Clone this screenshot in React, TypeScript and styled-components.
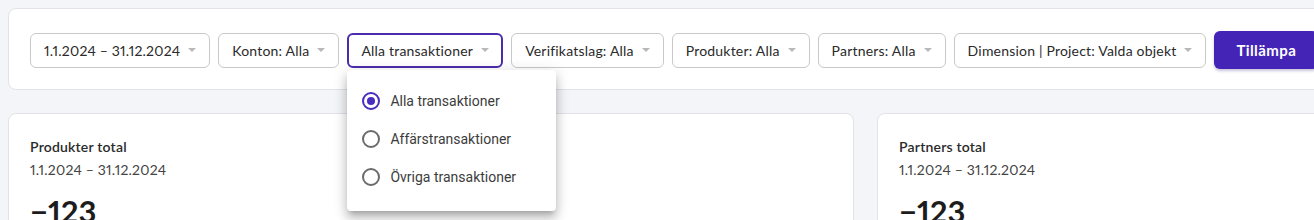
import React from "react";
import styled, { createGlobalStyle } from "styled-components";

const GlobalStyle = createGlobalStyle`
  html, body {
    margin: 0;
    padding: 0;
    background: #f4f5f8;
    overflow: hidden;
  }
  body {
    font-family: Lato, "Noto Sans", sans-serif;
    font-variant-numeric: proportional-nums;
    color: #222;
  }
`;

const Page = styled.div`
  width: 1715px;
  padding: 8px;
  display: flex;
  flex-direction: column;
  gap: 23px;
`;

const FilterCard = styled.div`
  background: #fff;
  border: 1px solid #e2e3e8;
  border-radius: 8px;
  padding: 22px 21px 20px;
`;

const FilterRow = styled.div`
  display: flex;
  align-items: center;
  gap: 8px;
  height: 38px;
`;

const SelectWrap = styled.div`
  position: relative;
`;

const SelectButton = styled.button<{ $active?: boolean }>`
  display: flex;
  align-items: center;
  gap: 8px;
  height: 35px;
  box-sizing: border-box;
  background: #fff;
  border: ${(p) => (p.$active ? "2px solid #4a2cad" : "1px solid #c9c9cc")};
  padding: 0 ${(p) => (p.$active ? 12 : 13)}px;
  border-radius: 6px;
  font-family: Lato, "Noto Sans", sans-serif;
  font-variant-numeric: proportional-nums;
  font-size: 14px;
  letter-spacing: 0.2px;
  color: #2a2a2a;
  white-space: nowrap;
  cursor: pointer;
`;

const Caret = styled.span`
  width: 0;
  height: 0;
  border-left: 4px solid transparent;
  border-right: 4px solid transparent;
  border-top: 4px solid #b8b8bc;
`;

const ApplyButton = styled.button`
  height: 38px;
  padding: 0 22px;
  background: #4423b7;
  color: #fff;
  border: none;
  border-radius: 6px;
  font-family: Lato, "Noto Sans", sans-serif;
  font-weight: 700;
  font-size: 15px;
  letter-spacing: 0.4px;
  box-shadow: 0 2px 3px rgba(40, 20, 110, 0.25);
  cursor: pointer;
`;

const Menu = styled.div`
  position: absolute;
  top: 37px;
  left: 0;
  width: 209px;
  background: #fff;
  border-radius: 4px;
  padding: 12px 0 15px;
  box-shadow: 0 5px 5px -3px rgba(0, 0, 0, 0.2), 0 8px 10px 1px rgba(0, 0, 0, 0.14),
    0 3px 14px 2px rgba(0, 0, 0, 0.12);
  z-index: 10;
`;

const MenuItem = styled.label`
  display: flex;
  align-items: center;
  gap: 10px;
  height: 38px;
  padding-left: 15px;
  font-family: Roboto, "Noto Sans", sans-serif;
  font-size: 14px;
  color: #3c3c3c;
  cursor: pointer;
`;

const RadioIcon = styled.span<{ $checked?: boolean }>`
  width: 18px;
  height: 18px;
  box-sizing: border-box;
  border-radius: 50%;
  border: 2px solid ${(p) => (p.$checked ? "#4a2cc0" : "#6b6b6b")};
  display: flex;
  align-items: center;
  justify-content: center;
  &::after {
    content: "";
    width: 8px;
    height: 8px;
    border-radius: 50%;
    background: ${(p) => (p.$checked ? "#4a2cc0" : "transparent")};
  }
`;

const CardGrid = styled.div`
  display: grid;
  grid-template-columns: 846px 846px;
  gap: 23px;
`;

const StatCard = styled.div`
  background: #fff;
  border: 1px solid #e2e3e8;
  border-radius: 8px;
  padding: 24px 21px;
  height: 200px;
`;

const StatTitle = styled.div`
  font-size: 14px;
  font-weight: 600;
  letter-spacing: 0.2px;
  color: #2a2a2a;
  line-height: 18px;
`;

const StatPeriod = styled.div`
  margin-top: 5px;
  font-size: 14px;
  letter-spacing: 0.2px;
  color: #444;
  line-height: 18px;
`;

const StatValue = styled.div`
  margin-top: 14px;
  font-size: 31px;
  font-weight: 700;
  color: #1c1c1c;
  line-height: 36px;
`;

const filters = [
  "1.1.2024 – 31.12.2024",
  "Konton: Alla",
  "Alla transaktioner",
  "Verifikatslag: Alla",
  "Produkter: Alla",
  "Partners: Alla",
  "Dimension | Project: Valda objekt",
];

const options = ["Alla transaktioner", "Affärstransaktioner", "Övriga transaktioner"];

const stats = [{ title: "Produkter total" }, { title: "Partners total" }];

export default function App() {
  return (
    <>
      <GlobalStyle />
      <Page>
        <FilterCard>
          <FilterRow>
            {filters.map((f, i) => (
              <SelectWrap key={f}>
                <SelectButton $active={i === 2}>
                  {f}
                  <Caret />
                </SelectButton>
                {i === 2 && (
                  <Menu>
                    {options.map((o, j) => (
                      <MenuItem key={o}>
                        <RadioIcon $checked={j === 0} />
                        {o}
                      </MenuItem>
                    ))}
                  </Menu>
                )}
              </SelectWrap>
            ))}
            <ApplyButton>Tillämpa</ApplyButton>
          </FilterRow>
        </FilterCard>
        <CardGrid>
          {stats.map((s) => (
            <StatCard key={s.title}>
              <StatTitle>{s.title}</StatTitle>
              <StatPeriod>1.1.2024 – 31.12.2024</StatPeriod>
              <StatValue>−123</StatValue>
            </StatCard>
          ))}
        </CardGrid>
      </Page>
    </>
  );
}
